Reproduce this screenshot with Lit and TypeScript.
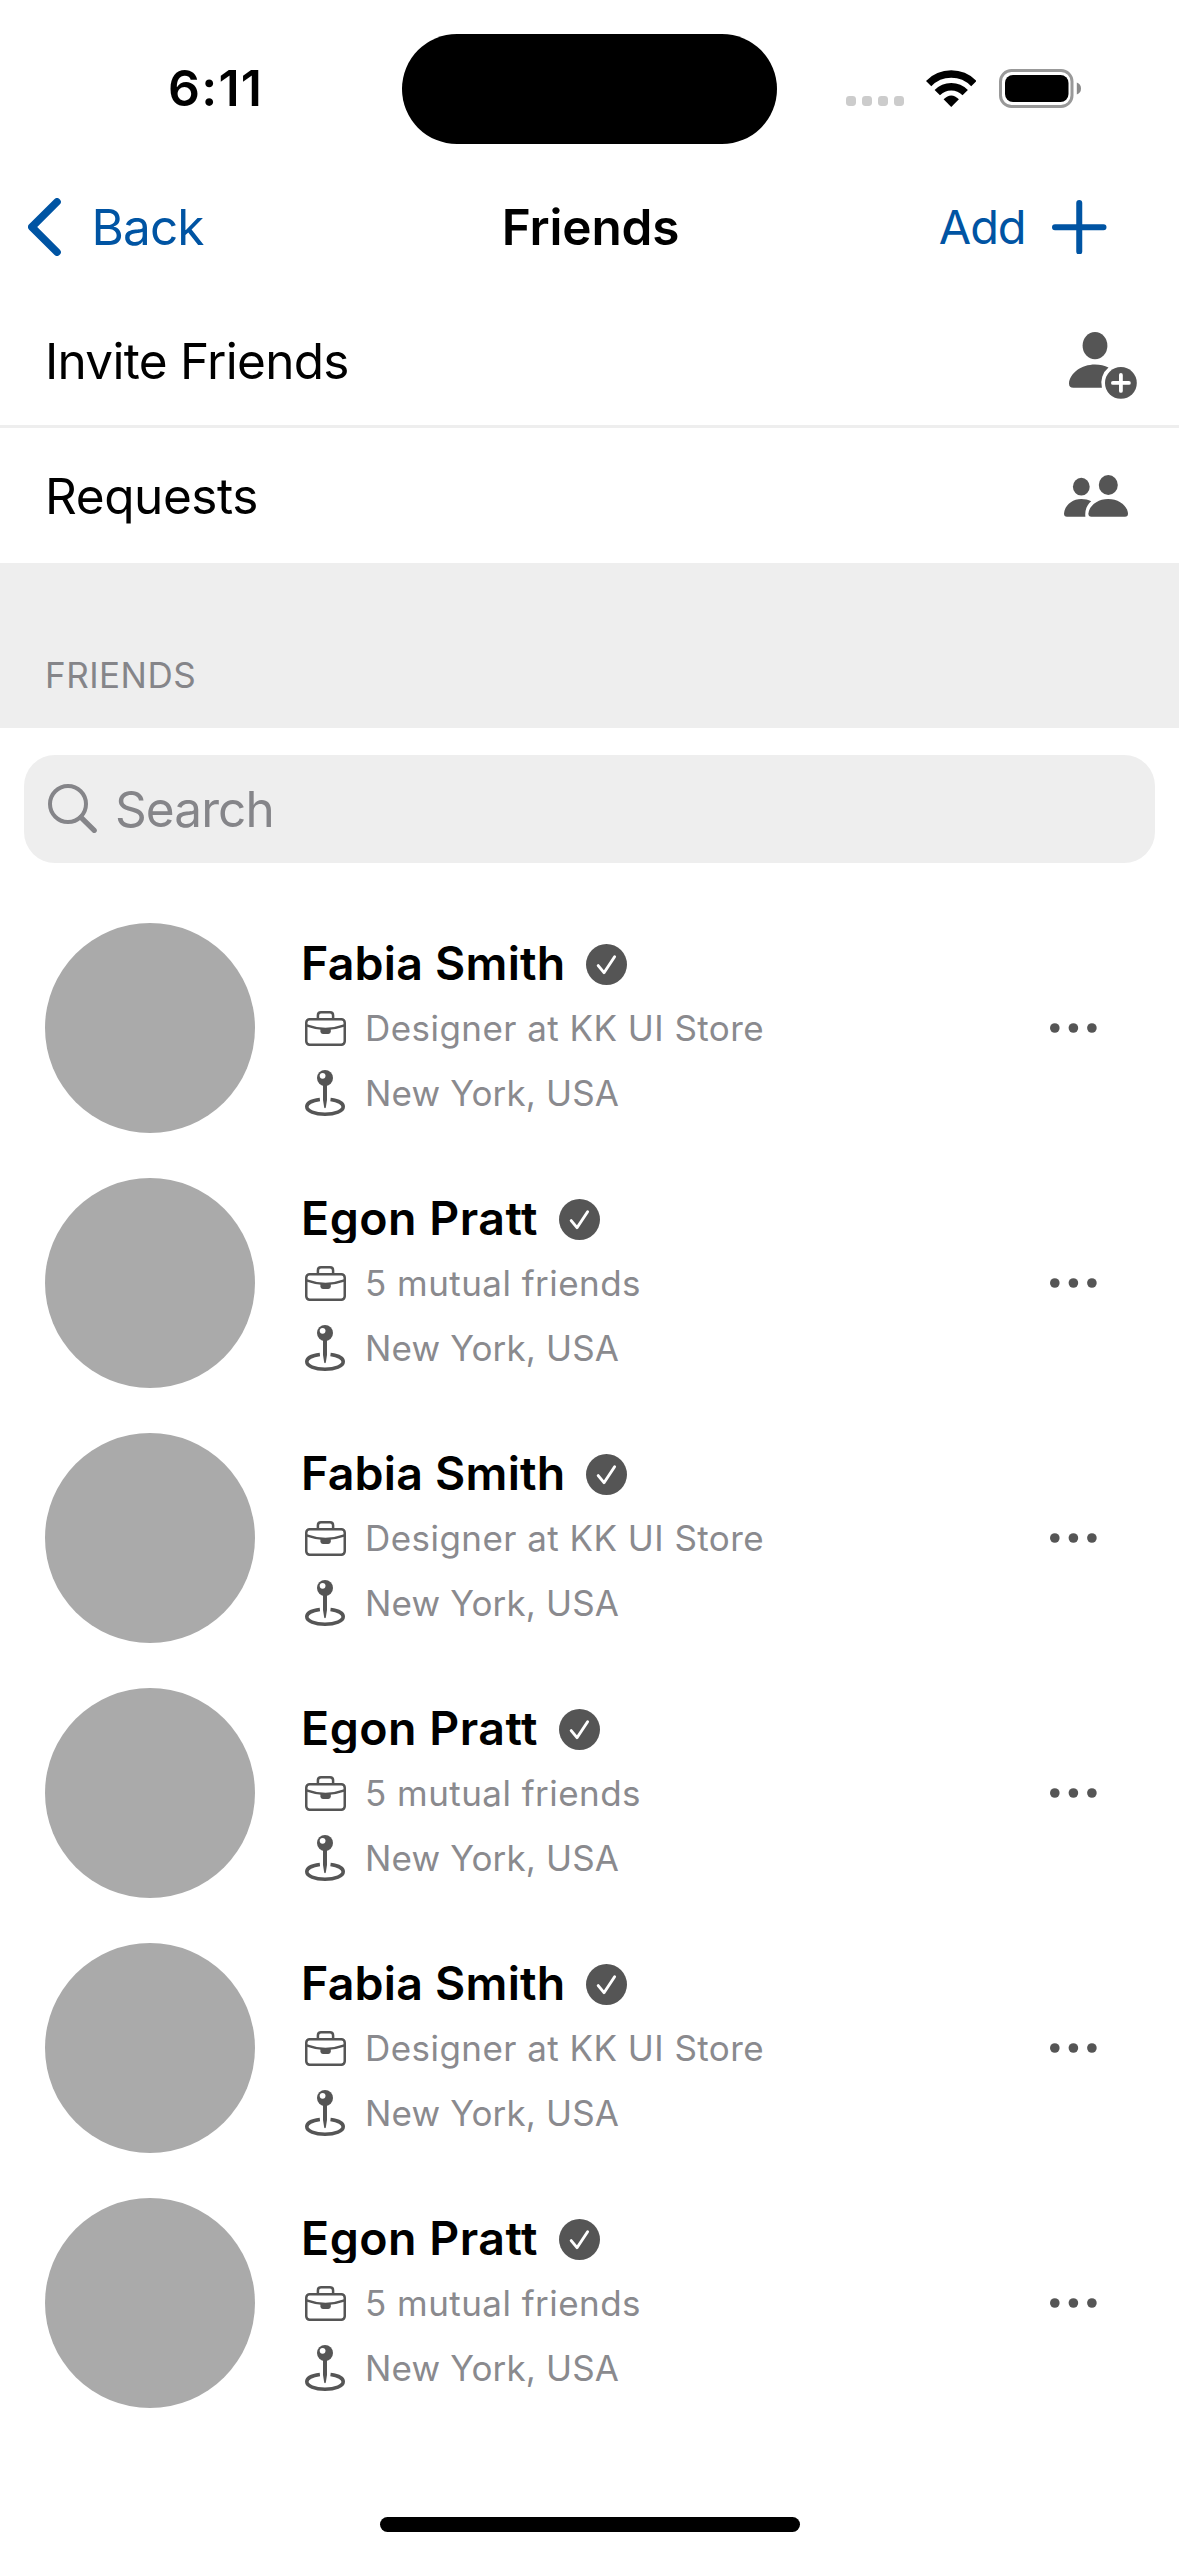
import { LitElement, html, css, svg } from "lit";
import { customElement, property } from "lit/decorators.js";

interface Friend {
  name: string;
  info: string;
  place: string;
}

const fabia: Friend = { name: "Fabia Smith", info: "Designer at KK UI Store", place: "New York, USA" };
const egon: Friend = { name: "Egon Pratt", info: "5 mutual friends", place: "New York, USA" };
const FRIENDS: Friend[] = [fabia, egon, fabia, egon, fabia, egon];

@customElement("friend-row")
export class FriendRow extends LitElement {
  @property({ attribute: false }) friend!: Friend;

  static styles = css`
    :host {
      display: flex;
      align-items: center;
      height: 210px;
      --tracking: 0.22px;
    }
    :host(:nth-child(even)) {
      --tracking: 0.51px;
    }
    svg {
      display: block;
      flex: none;
    }
    .avatar {
      width: 210px;
      height: 210px;
      border-radius: 50%;
      background: #aaaaaa;
      flex: none;
    }
    .text {
      flex: 1;
      margin-left: 46px;
      display: grid;
      grid-template-rows: repeat(3, 65px);
      align-items: center;
    }
    .head {
      display: flex;
      align-items: center;
      gap: 21px;
    }
    .name {
      height: 50px;
      line-height: 50px;
      overflow: hidden;
      font-size: 46.5px;
      font-weight: 600;
      letter-spacing: var(--tracking);
      color: #000;
      white-space: nowrap;
    }
    .badge {
      margin-top: 3px;
    }
    .detail {
      display: flex;
      align-items: center;
      padding-left: 4px;
      font-size: 35px;
      line-height: 44px;
      letter-spacing: 0.45px;
      color: #8a8a8e;
      white-space: nowrap;
    }
    .case {
      margin-right: 19px;
    }
    .pin {
      margin-right: 20px;
    }
    .place {
      letter-spacing: 0.14px;
    }
    .more {
      margin-right: 82px;
    }
  `;

  render() {
    return html`
      <div class="avatar"></div>
      <div class="text">
        <div class="head">
          <span class="name">${this.friend.name}</span>
          <svg class="badge" width="41" height="41" viewBox="0 0 41 41">
            <circle cx="20.5" cy="20.5" r="20.5" fill="#555" />
            <path d="M12.2 21.6 L18 28.7 L28.6 12.8" fill="none" stroke="#fff" stroke-width="2.9" stroke-linecap="round" stroke-linejoin="round" />
          </svg>
        </div>
        <div class="detail">
          <svg class="case" width="41" height="35" viewBox="0 0 41 35" fill="none" stroke="#555" stroke-width="2.5">
            <rect x="1.25" y="8.25" width="38.5" height="25.5" rx="3.4" />
            <path d="M12.9 8 V4.4 Q12.9 1.25 16 1.25 H25 Q28.1 1.25 28.1 4.4 V8" />
            <path d="M1.5 14.4 Q20.5 21.4 39.5 14.4" />
            <path d="M15.4 17.8 H25.8 V20.6 Q25.8 23 23.4 23 H17.8 Q15.4 23 15.4 20.6 Z" fill="#555" stroke="none" />
          </svg>
          <span>${this.friend.info}</span>
        </div>
        <div class="detail">
          <svg class="pin" width="40" height="46" viewBox="0 0 40 46">
            <path d="M14.9 29.5 C7 30.4 1.8 33.2 1.8 36.8 C1.8 41 9.8 44.2 20 44.2 S38.2 41 38.2 36.8 C38.2 33.2 33 30.4 25.5 29.5" fill="none" stroke="#555" stroke-width="3.6" />
            <path d="M18 14 H22 V30 L20.8 37.4 Q20 39 19.2 37.4 L18 30 Z" fill="#555" />
            <circle cx="20" cy="8" r="8" fill="#555" />
            <circle cx="17.6" cy="5.8" r="2.9" fill="#fff" />
          </svg>
          <span class="place">${this.friend.place}</span>
        </div>
      </div>
      <svg class="more" width="47" height="10" viewBox="0 0 47 10" fill="#555">
        <circle cx="4.8" cy="5" r="4.8" />
        <circle cx="23.4" cy="5" r="4.8" />
        <circle cx="41.9" cy="5" r="4.8" />
      </svg>
    `;
  }
}

const signalDots = [0, 16, 32, 48].map(
  (x) => svg`<rect x=${x} y="0" width="10" height="10" rx="3.4" />`
);

@customElement("app-root")
export class AppRoot extends LitElement {
  static styles = css`
    :host {
      display: flex;
      flex-direction: column;
      width: 1179px;
      height: 2556px;
      box-sizing: border-box;
      background: #fff;
      font-family: Inter, "Liberation Sans", sans-serif;
      color: #000;
      overflow: hidden;
    }
    svg {
      display: block;
      flex: none;
    }
    .status {
      height: 176px;
      display: flex;
      align-items: center;
      padding-left: 168px;
      box-sizing: border-box;
      flex: none;
    }
    .time {
      width: 233.5px;
      font-size: 50px;
      font-weight: 600;
      letter-spacing: 1.24px;
      line-height: 60px;
    }
    .island {
      width: 375px;
      height: 110.5px;
      margin-top: 1.5px;
      border-radius: 56px;
      background: #000;
    }
    .signal {
      margin: 26px 22px 0 69px;
    }
    .wifi {
      margin-right: 22.5px;
    }
    .nav {
      height: 102px;
      margin-bottom: 18px;
      display: grid;
      grid-template-columns: 1fr auto 1fr;
      align-items: center;
      padding: 0 72.5px 0 28px;
      font-size: 49.5px;
      line-height: 60px;
      flex: none;
    }
    .back,
    .add {
      display: flex;
      align-items: center;
      color: #0054a3;
    }
    .back {
      gap: 30.5px;
      letter-spacing: -0.9px;
    }
    .title {
      margin-left: 46.5px;
      font-weight: 600;
      letter-spacing: -0.15px;
    }
    .add {
      justify-content: flex-end;
      gap: 26.5px;
      font-size: 47px;
      letter-spacing: -1.1px;
    }
    .link {
      display: flex;
      align-items: center;
      justify-content: space-between;
      padding: 0 51px 0 45px;
      height: 135px;
      font-size: 49.5px;
      letter-spacing: -0.42px;
      flex: none;
    }
    .invite {
      height: 129px;
      padding-right: 42px;
      border-bottom: 3px solid #eeeeee;
      letter-spacing: -0.72px;
    }
    .invite svg {
      margin-top: 10px;
    }
    .section {
      height: 165px;
      box-sizing: border-box;
      background: #eeeeee;
      display: flex;
      align-items: flex-end;
      padding: 0 0 31px 45px;
      font-size: 35px;
      line-height: 44px;
      letter-spacing: 0.5px;
      color: #858589;
      flex: none;
    }
    .search {
      margin: 27px 24px 0;
      height: 108px;
      border-radius: 31px;
      background: #eeeeee;
      display: flex;
      align-items: center;
      gap: 18px;
      padding-left: 24px;
      font-size: 49.5px;
      letter-spacing: -0.9px;
      color: #858589;
      flex: none;
    }
    .search svg {
      margin-bottom: 1px;
    }
    .list {
      display: flex;
      flex-direction: column;
      gap: 45px;
      padding: 60px 0 0 45px;
      flex: 1;
    }
    .home {
      width: 420px;
      height: 15px;
      border-radius: 8px;
      background: #000;
      margin: 0 auto 24px;
      flex: none;
    }
  `;

  render() {
    return html`
      <div class="status">
        <span class="time">6:11</span>
        <div class="island"></div>
        <svg class="signal" width="58" height="10" viewBox="0 0 58 10" fill="#cccccc">${signalDots}</svg>
        <svg class="wifi" width="50.5" height="37" viewBox="0 0 50.5 37">
          <g fill="none" stroke="#000" stroke-width="7.5">
            <path d="M2.6 13.6 A31.5 31.5 0 0 1 47.9 13.6" />
            <path d="M11.3 22.7 A19.5 19.5 0 0 1 39.2 22.7" />
          </g>
          <path d="M25.25 37 L17.6 29.3 Q25.25 21.6 32.9 29.3 Z" />
        </svg>
        <svg width="82" height="39" viewBox="0 0 82 39">
          <rect x="1.5" y="1.5" width="71.5" height="36" rx="11" fill="none" stroke="#999" stroke-width="3" />
          <rect x="6" y="6" width="63.5" height="27" rx="8" />
          <path d="M77.8 13.5 Q82 15 82 19.5 T77.8 25.5 Z" fill="#8a8a8a" />
        </svg>
      </div>

      <div class="nav">
        <div class="back">
          <svg width="33" height="58" viewBox="0 0 33 58">
            <path d="M29 3.9 L3.8 29 L29 54.1" fill="none" stroke="#0054a3" stroke-width="7.6" stroke-linecap="round" stroke-linejoin="round" />
          </svg>
          <span>Back</span>
        </div>
        <span class="title">Friends</span>
        <div class="add">
          <span>Add</span>
          <svg width="54.5" height="54.5" viewBox="0 0 54.5 54.5">
            <path d="M27.25 3 V51.5 M3 27.25 H51.5" fill="none" stroke="#0054a3" stroke-width="6" stroke-linecap="round" />
          </svg>
        </div>
      </div>

      <div class="link invite">
        <span>Invite Friends</span>
        <svg width="68" height="67" viewBox="0 0 68 67" fill="#555">
          <ellipse cx="26" cy="13.7" rx="12.4" ry="13.6" />
          <path d="M4.4 55.8 Q0 55.8 0 51.4 C0.6 41 12.6 32.4 26 32.4 C31 32.4 35.6 33.6 39.5 35.6 A19.7 19.7 0 0 0 32.9 55.8 Z" />
          <circle cx="51.9" cy="50.9" r="15.9" />
          <path d="M51.9 42.9 V58.9 M43.9 50.9 H59.9" fill="none" stroke="#fff" stroke-width="3.8" stroke-linecap="round" />
        </svg>
      </div>
      <div class="link">
        <span>Requests</span>
        <svg width="64" height="42" viewBox="0 0 64 42" fill="#555">
          <ellipse cx="17.3" cy="11.7" rx="8.4" ry="8.9" />
          <ellipse cx="44.3" cy="10" rx="9.5" ry="10" />
          <path d="M3 41.8 Q0 41.8 0 38.6 C0.5 30.6 8 24 17.3 24 C21 24 24.3 24.8 27.2 26.3 C23 30 20.6 34.8 21.4 41.8 Z" />
          <path d="M27.4 41.8 Q24.4 41.8 24.4 38.6 C25 30.6 33.6 24 44.2 24 S63.4 30.6 64 38.6 Q64 41.8 61 41.8 Z" />
        </svg>
      </div>

      <div class="section">FRIENDS</div>

      <div class="search">
        <svg width="49" height="49" viewBox="0 0 49 49" fill="none" stroke="#858589">
          <circle cx="20" cy="20" r="18" stroke-width="4" />
          <path d="M33 33.4 L46.2 46.4" stroke-width="5.2" stroke-linecap="round" />
        </svg>
        <span>Search</span>
      </div>

      <div class="list">${FRIENDS.map((f) => html`<friend-row .friend=${f}></friend-row>`)}</div>

      <div class="home"></div>
    `;
  }
}
